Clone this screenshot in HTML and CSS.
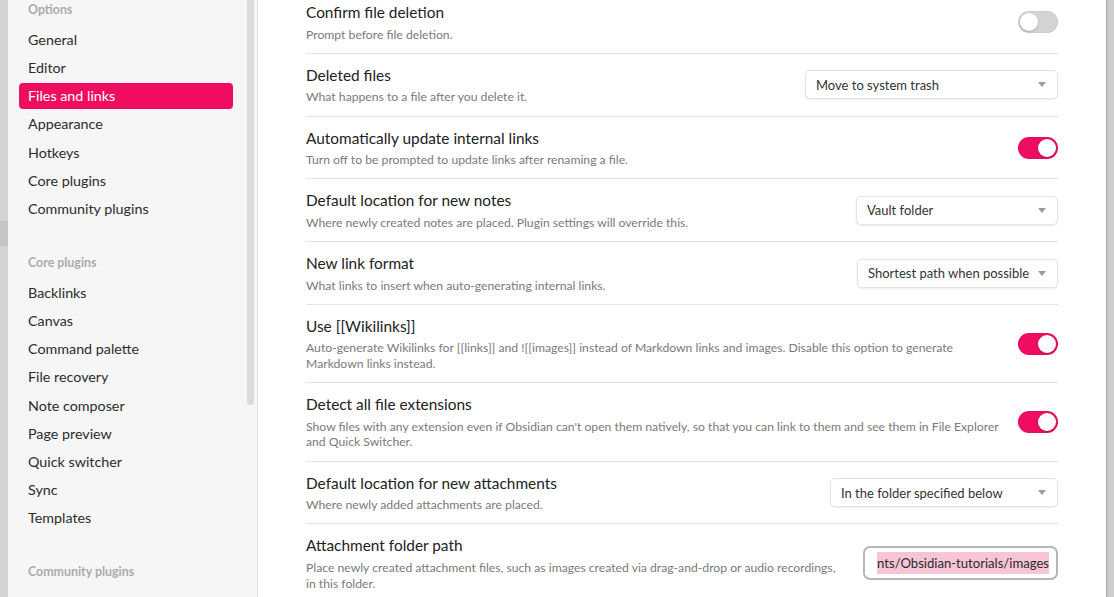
FILE: index.html
```html
<!DOCTYPE html>
<html lang="en">
<head>
<meta charset="utf-8">
<title>Settings - Files and links</title>
<link rel="stylesheet" href="styles.css">
</head>
<body>
<div class="screen">
  <div class="dim dim-left"><div class="dim-block"></div></div>

  <aside class="sidebar">
    <nav class="nav">
      <div class="nav-group">
        <div class="nav-header">Options</div>
        <div class="nav-list">
          <div class="nav-item">General</div>
          <div class="nav-item">Editor</div>
          <div class="nav-item active">Files and links</div>
          <div class="nav-item">Appearance</div>
          <div class="nav-item">Hotkeys</div>
          <div class="nav-item">Core plugins</div>
          <div class="nav-item">Community plugins</div>
        </div>
      </div>
      <div class="nav-group">
        <div class="nav-header">Core plugins</div>
        <div class="nav-list">
          <div class="nav-item">Backlinks</div>
          <div class="nav-item">Canvas</div>
          <div class="nav-item">Command palette</div>
          <div class="nav-item">File recovery</div>
          <div class="nav-item">Note composer</div>
          <div class="nav-item">Page preview</div>
          <div class="nav-item">Quick switcher</div>
          <div class="nav-item">Sync</div>
          <div class="nav-item">Templates</div>
        </div>
      </div>
      <div class="nav-group">
        <div class="nav-header">Community plugins</div>
      </div>
    </nav>
    <div class="scroll-track"><div class="scroll-thumb"></div></div>
  </aside>

  <main class="content">
    <div class="settings">
      <div class="setting-item">
        <div class="setting-info">
          <div class="setting-name">Confirm file deletion</div>
          <div class="setting-desc">Prompt before file deletion.</div>
        </div>
        <div class="setting-control"><div class="toggle"><div class="knob"></div></div></div>
      </div>

      <div class="setting-item">
        <div class="setting-info">
          <div class="setting-name">Deleted files</div>
          <div class="setting-desc">What happens to a file after you delete it.</div>
        </div>
        <div class="setting-control">
          <div class="dropdown dd-trash"><span>Move to system trash</span><span class="caret"></span></div>
        </div>
      </div>

      <div class="setting-item">
        <div class="setting-info">
          <div class="setting-name">Automatically update internal links</div>
          <div class="setting-desc">Turn off to be prompted to update links after renaming a file.</div>
        </div>
        <div class="setting-control"><div class="toggle on"><div class="knob"></div></div></div>
      </div>

      <div class="setting-item">
        <div class="setting-info">
          <div class="setting-name">Default location for new notes</div>
          <div class="setting-desc">Where newly created notes are placed. Plugin settings will override this.</div>
        </div>
        <div class="setting-control">
          <div class="dropdown dd-vault"><span>Vault folder</span><span class="caret"></span></div>
        </div>
      </div>

      <div class="setting-item">
        <div class="setting-info">
          <div class="setting-name">New link format</div>
          <div class="setting-desc">What links to insert when auto-generating internal links.</div>
        </div>
        <div class="setting-control">
          <div class="dropdown dd-short"><span>Shortest path when possible</span><span class="caret"></span></div>
        </div>
      </div>

      <div class="setting-item">
        <div class="setting-info">
          <div class="setting-name">Use [[Wikilinks]]</div>
          <div class="setting-desc">Auto-generate Wikilinks for [[links]] and ![[images]] instead of Markdown links and images. Disable this option to generate Markdown links instead.</div>
        </div>
        <div class="setting-control"><div class="toggle on"><div class="knob"></div></div></div>
      </div>

      <div class="setting-item">
        <div class="setting-info">
          <div class="setting-name">Detect all file extensions</div>
          <div class="setting-desc">Show files with any extension even if Obsidian can't open them natively, so that you can link to them and see them in File Explorer and Quick Switcher.</div>
        </div>
        <div class="setting-control"><div class="toggle on"><div class="knob"></div></div></div>
      </div>

      <div class="setting-item">
        <div class="setting-info">
          <div class="setting-name">Default location for new attachments</div>
          <div class="setting-desc">Where newly added attachments are placed.</div>
        </div>
        <div class="setting-control">
          <div class="dropdown dd-folder"><span>In the folder specified below</span><span class="caret"></span></div>
        </div>
      </div>

      <div class="setting-item">
        <div class="setting-info">
          <div class="setting-name">Attachment folder path</div>
          <div class="setting-desc">Place newly created attachment files, such as images created via drag-and-drop or audio recordings, in this folder.</div>
        </div>
        <div class="setting-control">
          <div class="path-input"><span class="sel">nts/Obsidian-tutorials/images</span></div>
        </div>
      </div>
    </div>
  </main>

  <div class="dim dim-right"></div>
</div>
</body>
</html>
```

FILE: styles.css
```css
html, body {
  margin: 0;
  padding: 0;
  height: 597px;
  overflow: hidden;
  font-family: "Lato", "Noto Sans", sans-serif;
  background: #d3d3d3;
}

.screen {
  display: flex;
  height: 597px;
}

/* dimmed backdrop strips */
.dim {
  flex: 0 0 8px;
}
.dim-left {
  background: #d4d4d4;
  display: flex;
  flex-direction: column;
  padding-top: 221px;
  box-sizing: border-box;
}
.dim-block {
  height: 25px;
  background: #c5c5c5;
}
.dim-right {
  background: linear-gradient(to right, #a9a9a9 0, #a9a9a9 1px, #c6c6c6 1px, #d0d0d0 100%);
}

/* sidebar */
.sidebar {
  flex: 0 0 249px;
  display: flex;
  background: #f6f6f6;
  border-right: 1px solid #e3e3e3;
  overflow: hidden;
}
.nav {
  flex: 1;
  padding: 2px 14px 0 11px;
}
.nav-group {
  margin-bottom: 33px;
}
.nav-header {
  font-size: 12.4px;
  font-weight: 700;
  line-height: 16px;
  color: #ababab;
  padding-left: 9px;
  margin-bottom: 9px;
}
.nav-list {
  display: flex;
  flex-direction: column;
  gap: 2.17px;
}
.nav-item {
  height: 26px;
  line-height: 26px;
  padding: 0 9px;
  font-size: 14.3px;
  color: #2c2c2c;
  border-radius: 4px;
  white-space: nowrap;
}
.nav-item.active {
  background: #ef0d62;
  color: #ffffff;
}
.scroll-track {
  flex: 0 0 7px;
  margin-right: 3px;
}
.scroll-thumb {
  height: 405px;
  background: #dbdbdb;
  border-radius: 0 0 4px 4px;
}

/* content */
.content {
  flex: 1;
  background: #ffffff;
  padding: 0 48px;
  overflow: hidden;
}
.settings {
  margin-top: -9px;
}
.setting-item {
  display: flex;
  align-items: center;
  padding: 11px 0 10.7px;
  border-top: 1px solid #e2e2e2;
}
.setting-item:first-child {
  border-top: none;
}
.setting-info {
  flex: 1 1 auto;
  min-width: 0;
  margin-right: 16px;
}
.setting-name {
  font-size: 15.4px;
  line-height: 21.5px;
  color: #222222;
}
.setting-desc {
  font-size: 12.2px;
  line-height: 15.6px;
  color: #7a7a7a;
  padding-top: 3px;
}
.setting-control {
  flex: 0 0 auto;
  display: flex;
  justify-content: flex-end;
}

/* toggle */
.toggle {
  width: 40px;
  height: 22px;
  box-sizing: border-box;
  padding: 2px;
  border-radius: 11px;
  background: #d4d4d4;
  box-shadow: inset 0 0 0 1px rgba(0, 0, 0, 0.04);
  display: flex;
  align-items: center;
}
.toggle.on {
  background: #ef0d62;
  justify-content: flex-end;
}
.knob {
  width: 18px;
  height: 18px;
  border-radius: 50%;
  background: #ffffff;
  box-shadow: 0 1px 2px rgba(0, 0, 0, 0.2);
}

/* dropdown */
.dropdown {
  height: 29px;
  box-sizing: border-box;
  border: 1px solid #e4e4e4;
  border-radius: 5px;
  box-shadow: 0 1px 2px rgba(0, 0, 0, 0.08);
  background: #ffffff;
  display: flex;
  align-items: center;
  justify-content: space-between;
  padding: 0 11px 0 10px;
  font-size: 13px;
  color: #333333;
  white-space: nowrap;
}
.caret {
  width: 0;
  height: 0;
  border-left: 4.5px solid transparent;
  border-right: 4.5px solid transparent;
  border-top: 5px solid #9c9c9c;
  margin-left: 8px;
}
.dd-trash { width: 253px; }
.dd-vault { width: 202px; }
.dd-short { width: 201px; }
.dd-folder { width: 228px; }

/* text input (focused, text selected) */
.path-input {
  width: 195px;
  height: 34px;
  box-sizing: border-box;
  border: 2px solid #b6b6b6;
  border-radius: 7px;
  background: #ffffff;
  display: flex;
  align-items: center;
  justify-content: flex-end;
  padding: 0 7px;
  overflow: hidden;
  font-size: 13.1px;
  color: #2a2a2a;
  white-space: nowrap;
}
.sel {
  background: #f7c5d6;
  line-height: 22px;
}
```
